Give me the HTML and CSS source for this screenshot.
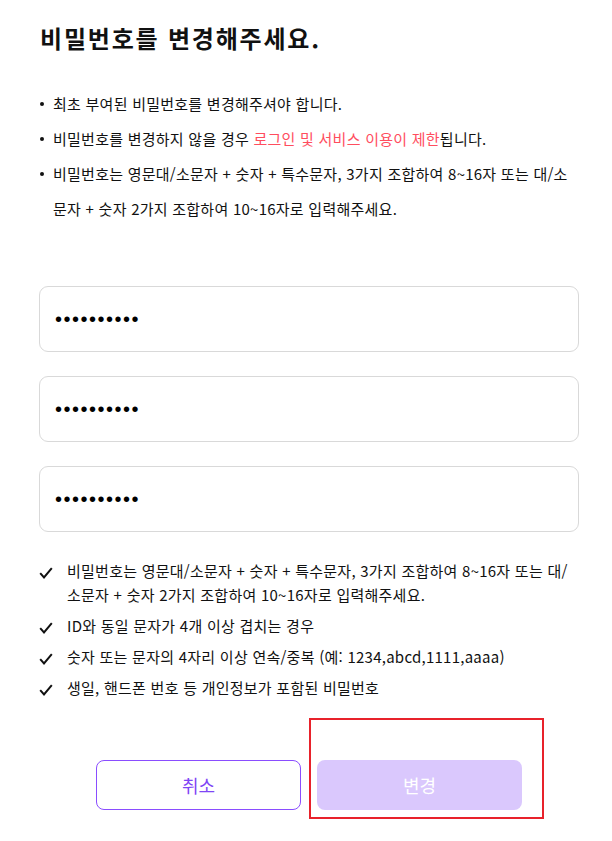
FILE: index.html
```html
<!DOCTYPE html>
<html lang="ko">
<head>
<meta charset="utf-8">
<link rel="stylesheet" href="styles.css">
</head>
<body>
<div class="page">
  <h1 class="title">비밀번호를 변경해주세요.</h1>
  <ul class="notice">
    <li>최초 부여된 비밀번호를 변경해주셔야 합니다.</li>
    <li>비밀번호를 변경하지 않을 경우 <span class="warn">로그인 및 서비스 이용이 제한</span>됩니다.</li>
    <li>비밀번호는 영문대/소문자 + 숫자 + 특수문자, 3가지 조합하여 8~16자 또는 대/소문자 + 숫자 2가지 조합하여 10~16자로 입력해주세요.</li>
  </ul>
  <div class="fields">
    <input class="field" type="password" value="abcdefghij">
    <input class="field" type="password" value="abcdefghij">
    <input class="field" type="password" value="abcdefghij">
  </div>
  <ul class="rules">
    <li><svg class="check" viewBox="0 0 14 12" width="14" height="12"><path d="M1.2 6.2 L5 10.4 L12.8 1.2" fill="none" stroke="#111" stroke-width="2"/></svg><span>비밀번호는 영문대/소문자 + 숫자 + 특수문자, 3가지 조합하여 8~16자 또는 대/소문자 + 숫자 2가지 조합하여 10~16자로 입력해주세요.</span></li>
    <li><svg class="check" viewBox="0 0 14 12" width="14" height="12"><path d="M1.2 6.2 L5 10.4 L12.8 1.2" fill="none" stroke="#111" stroke-width="2"/></svg><span>ID와 동일 문자가 4개 이상 겹치는 경우</span></li>
    <li><svg class="check" viewBox="0 0 14 12" width="14" height="12"><path d="M1.2 6.2 L5 10.4 L12.8 1.2" fill="none" stroke="#111" stroke-width="2"/></svg><span>숫자 또는 문자의 4자리 이상 연속/중복 (예: 1234,abcd,1111,aaaa)</span></li>
    <li><svg class="check" viewBox="0 0 14 12" width="14" height="12"><path d="M1.2 6.2 L5 10.4 L12.8 1.2" fill="none" stroke="#111" stroke-width="2"/></svg><span>생일, 핸드폰 번호 등 개인정보가 포함된 비밀번호</span></li>
  </ul>
  <div class="actions">
    <button class="btn btn-cancel">취소</button>
    <div class="highlight">
      <button class="btn btn-submit">변경</button>
    </div>
  </div>
</div>
</body>
</html>
```
FILE: styles.css
```css
* { box-sizing: border-box; }
html, body { margin: 0; padding: 0; background: #fff; }
body {
  font-family: "Noto Sans CJK KR", "Noto Sans", sans-serif;
  color: #111;
  width: 612px;
}
.page {
  padding: 20px 34px 22px 39px;
}
.title {
  margin: 0 0 0 1px;
  font-size: 24px;
  font-weight: 700;
  line-height: 36px;
  letter-spacing: 1.8px;
}
.notice {
  list-style: none;
  margin: 30px 0 0 1px;
  padding: 0;
  font-size: 15px;
  line-height: 35px;
  letter-spacing: 0.25px;
}
.notice li {
  position: relative;
  padding-left: 13px;
}
.notice li::before {
  content: "";
  position: absolute;
  left: 0;
  top: 16px;
  width: 4px;
  height: 4px;
  border-radius: 50%;
  background: #111;
}
.warn { color: #ff4d5e; }
.fields {
  margin-top: 60px;
  display: flex;
  flex-direction: column;
  gap: 24px;
}
.field {
  display: block;
  width: 540px;
  height: 66px;
  border: 1px solid #d9d9d9;
  border-radius: 9px;
  padding: 0 15px;
  font-family: "Liberation Sans", sans-serif;
  font-size: 20px;
  letter-spacing: 1.5px;
  color: #000;
  background: #fff;
  outline: none;
}
.rules {
  list-style: none;
  margin: 27px 0 0 0;
  padding: 0;
  font-size: 15px;
  line-height: 24px;
  letter-spacing: 0.25px;
}
.rules li {
  display: flex;
  align-items: flex-start;
  margin-bottom: 7px;
}
.check {
  flex: none;
  margin: 8px 14px 0 0;
}
.rules li span { flex: 1; }
.actions {
  margin-top: 18px;
  display: flex;
  align-items: flex-end;
  gap: 8px;
  padding-left: 57px;
}
.btn {
  width: 205px;
  height: 50px;
  border-radius: 8px;
  font-family: "Noto Sans CJK KR", sans-serif;
  font-size: 18px;
  font-weight: 400;
  cursor: pointer;
}
.btn-cancel {
  background: #fff;
  border: 1px solid #8a4dff;
  color: #7f45f5;
  margin-bottom: 9px;
}
.btn-submit {
  display: block;
  background: #dac8fd;
  border: none;
  color: #fff;
}
.highlight {
  border: 2px solid #e8222b;
  padding: 40px 20px 7px 6px;
}
```
